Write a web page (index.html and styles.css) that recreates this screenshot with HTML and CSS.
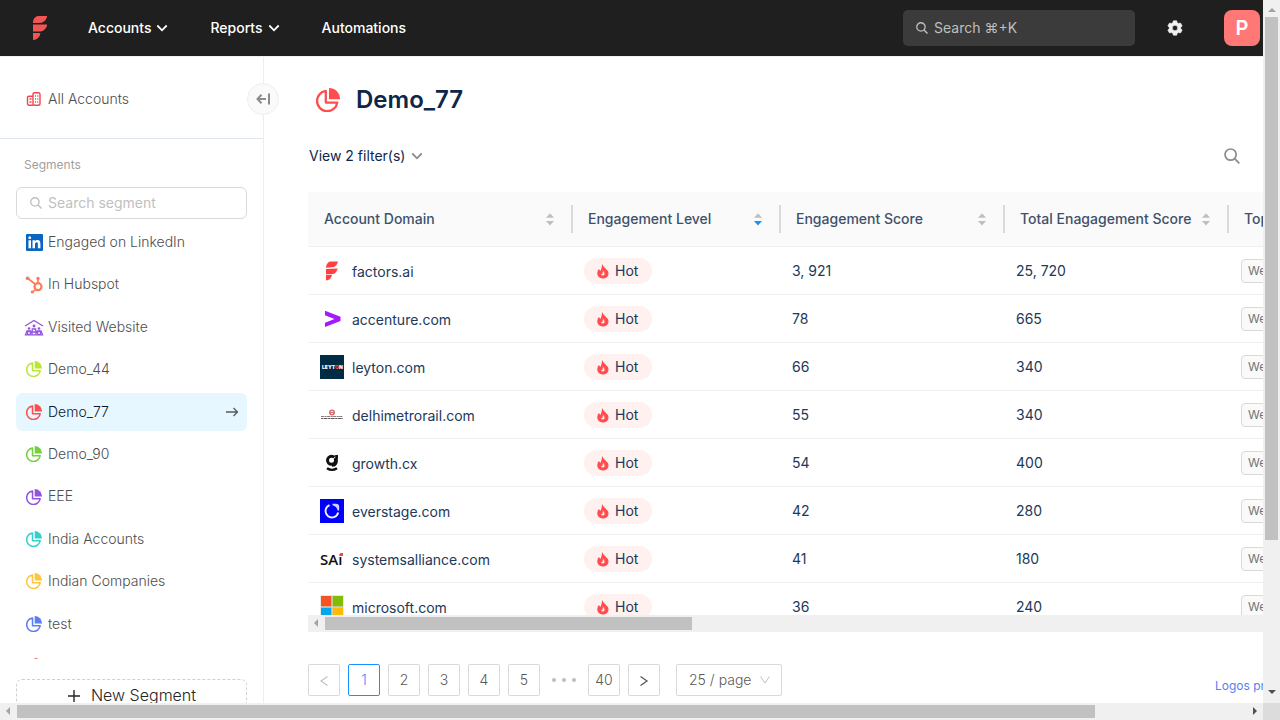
FILE: index.html
```html
<!DOCTYPE html>
<html lang="en">
<head>
<meta charset="utf-8">
<title>Demo_77</title>
<link rel="stylesheet" href="styles.css">
</head>
<body>
<svg class="defs" aria-hidden="true">
  <symbol id="pie" viewBox="0 0 24 24">
    <path d="M13 0A11 11 0 0 1 24 11.300H13Z" fill="currentColor"/>
    <path d="M9.800 2.900A10.200 10.200 0 1 0 21.300 14.600H9.800Z" fill="none" stroke="currentColor" stroke-width="2.300" stroke-linejoin="round"/>
  </symbol>
  <symbol id="search" viewBox="0 0 16 16">
    <circle cx="6.600" cy="6.600" r="5.600" fill="none" stroke="currentColor" stroke-width="1.700"/>
    <path d="M10.700 10.700 15.300 15.300" stroke="currentColor" stroke-width="1.900"/>
  </symbol>
  <symbol id="chevron" viewBox="0 0 12 12">
    <path d="M1.300 3.500 6 8.300 10.700 3.500" fill="none" stroke="currentColor" stroke-width="1.800"/>
  </symbol>
  <symbol id="factors" viewBox="0 0 14 24">
    <path d="M0 7V5.500Q1 0 6 0H14V1Q12 7 6 7ZM0 8.500H14V9.800Q12 15.600 6.500 15.600H0ZM0 17H7.500Q6.500 23.500 0 24Z" fill="currentColor"/>
  </symbol>
  <symbol id="flame" viewBox="0 0 12 15">
    <path d="M5.200 0C6 2.200 7.500 3.300 9 5 10.500 6.400 11.600 7.400 11.500 9.400 11.300 12.600 8.900 14.500 5.800 14.500 2.600 14.500.3 12.300.3 9.300.3 7.300 1 5.900 2 5L3.300 7C4.600 5.100 4.700 2.500 5.200 0Z" fill="currentColor"/>
    <path d="M6 6.500C6.300 7.800 7.600 8.400 7.600 9.700A1.700 1.700 0 0 1 4.200 9.900L5.600 9.400Z" fill="#fff1f0"/>
  </symbol>
  <symbol id="sort" viewBox="0 0 10 14">
    <path d="M1 5.800 5 1.300 9 5.800Z" fill="#bfbfbf"/>
    <path class="down" d="M1 9 5 13.500 9 9Z"/>
  </symbol>
</svg>

<div class="window">
  <div class="viewport">
    <header class="topbar">
      <a class="brand" href="#" aria-label="Home"><svg width="14" height="24"><use href="#factors"/></svg></a>
      <nav class="menu">
        <button type="button">Accounts <svg width="12" height="12"><use href="#chevron"/></svg></button>
        <button type="button">Reports <svg width="12" height="12"><use href="#chevron"/></svg></button>
        <a href="#">Automations</a>
      </nav>
      <button type="button" class="global-search"><svg width="12" height="12"><use href="#search"/></svg>Search ⌘+K</button>
      <button type="button" class="gear" aria-label="Settings">
        <svg width="16" height="16" viewBox="0 0 16 16"><path fill="currentColor" fill-rule="evenodd" stroke="currentColor" stroke-width=".6" stroke-linejoin="round" d="M6.300 .8H9.700L10.200 2.700 11.600 3.500 13.500 3 15.200 5.900 13.800 7.300V8.700L15.200 10.100 13.500 13 11.600 12.500 10.200 13.300 9.700 15.200H6.300L5.800 13.300 4.400 12.500 2.500 13 .8 10.100 2.200 8.700V7.300L.8 5.900 2.500 3 4.400 3.500 5.800 2.700ZM8 5.300A2.700 2.700 0 1 0 8 10.700 2.700 2.700 0 0 0 8 5.300Z"/></svg>
      </button>
      <button type="button" class="avatar">P</button>
    </header>

    <div class="body">
      <aside class="sidebar">
        <button type="button" class="collapse" aria-label="Collapse sidebar">
          <svg width="14" height="12" viewBox="0 0 14 12"><path d="M10 6H1.500M5.500 1.800 1.500 6 5.500 10.200M13 .5V11.500" fill="none" stroke="currentColor" stroke-width="2"/></svg>
        </button>
        <div class="all">
          <a href="#">
            <svg width="20" height="16" viewBox="0 0 20 16"><g fill="none" stroke="#f5434f" stroke-width="1.400"><path d="M9 5.200H5A1.500 1.500 0 0 0 3.500 6.700V12.800A1.500 1.500 0 0 0 5 14.300H9"/><rect x="9" y="1.700" width="7" height="12.600" rx="1.500"/></g><path d="M5.500 8H7.500M5.500 11H7.500M11 5H12M13.300 5H14.300M11 8H12M13.300 8H14.300M11 11H12M13.300 11H14.300" stroke="#f5434f" stroke-width="1.400"/></svg>
            All Accounts</a>
        </div>
        <h2>Segments</h2>
        <label class="segment-search"><svg width="12" height="12"><use href="#search"/></svg><input type="text" placeholder="Search segment" aria-label="Search segment"></label>
        <ul class="segments">
          <li><a href="#"><svg width="20" height="20" viewBox="0 0 20 20"><rect x="2" y="2" width="17" height="17" rx="1" fill="#0a66c2"/><path fill="#fff" d="M4.500 8.300H7V16.300H4.500ZM5.750 4.300A1.400 1.400 0 1 1 5.740 4.300ZM8.500 8.300H10.900V9.400C11.400 8.600 12.300 8.100 13.400 8.100 15.800 8.100 16.400 9.700 16.400 11.900V16.300H13.900V12.400C13.900 11.300 13.800 10.300 12.600 10.300 11.300 10.300 11 11.300 11 12.400V16.300H8.500Z"/></svg>Engaged on LinkedIn</a></li>
          <li><a href="#"><svg width="20" height="20" viewBox="0 0 20 20" class="c-hubspot"><g fill="none" stroke="currentColor"><circle cx="14" cy="11.700" r="3.500" stroke-width="2.200"/><path d="M14 7.500V4M11 9 4 3.500M11.500 14.500 8.500 17.300" stroke-width="1.700"/></g><g fill="currentColor"><circle cx="14" cy="3.500" r="1.700"/><circle cx="3.600" cy="3.300" r="1.900"/><circle cx="8.200" cy="17" r="1.500"/></g></svg>In Hubspot</a></li>
          <li><a href="#"><svg width="20" height="20" viewBox="0 0 20 20" class="c-purple"><g fill="none" stroke="currentColor" stroke-width="1.300"><path d="M1 9 10 3.500 19 9"/><circle cx="5" cy="11.500" r=".7"/><circle cx="10" cy="9" r=".8"/><circle cx="15" cy="11.500" r=".7"/><circle cx="5" cy="16" r="1.600"/><circle cx="15" cy="16" r="1.600"/><path d="M1.500 17.800 3 14H6.500L8 16.500 8.300 12H11.700L12 16.500 13.500 14H17L18.500 17.800ZM8 15H12"/></g></svg>Visited Website</a></li>
          <li><a href="#"><svg class="pie c-lime"><use href="#pie"/></svg>Demo_44</a></li>
          <li class="active"><a href="#" aria-current="page"><svg class="pie c-red"><use href="#pie"/></svg>Demo_77<svg class="go" width="14" height="10" viewBox="0 0 14 10"><path d="M1 5H12.500M8.500 1 12.500 5 8.500 9" fill="none" stroke="currentColor" stroke-width="1.300"/></svg></a></li>
          <li><a href="#"><svg class="pie c-green"><use href="#pie"/></svg>Demo_90</a></li>
          <li><a href="#"><svg class="pie c-purple"><use href="#pie"/></svg>EEE</a></li>
          <li><a href="#"><svg class="pie c-teal"><use href="#pie"/></svg>India Accounts</a></li>
          <li><a href="#"><svg class="pie c-gold"><use href="#pie"/></svg>Indian Companies</a></li>
          <li><a href="#"><svg class="pie c-blue"><use href="#pie"/></svg>test</a></li>
          <li><a href="#"><svg class="pie c-red"><use href="#pie"/></svg></a></li>
        </ul>
        <div class="sidebar-foot">
          <button type="button" class="new-segment"><svg width="14" height="14" viewBox="0 0 14 14"><path d="M7 1V13M1 7H13" stroke="currentColor" stroke-width="1.400"/></svg>New Segment</button>
        </div>
      </aside>

      <main class="main">
        <div class="title"><svg width="24" height="24" class="c-red"><use href="#pie"/></svg><h1>Demo_77</h1></div>
        <div class="tools">
          <button type="button" class="filters">View 2 filter(s) <svg width="12" height="12"><use href="#chevron"/></svg></button>
          <button type="button" class="find" aria-label="Search table"><svg width="16" height="16"><use href="#search"/></svg></button>
        </div>
        <div class="table-clip">
          <table>
            <colgroup><col class="w-domain"><col class="w-level"><col class="w-score"><col class="w-score"><col class="w-top"></colgroup>
            <thead>
              <tr>
                <th><div>Account Domain <svg class="sort"><use href="#sort"/></svg></div></th>
                <th><div>Engagement Level <svg class="sort sorted"><use href="#sort"/></svg></div></th>
                <th><div>Engagement Score <svg class="sort"><use href="#sort"/></svg></div></th>
                <th><div>Total Enagagement Score <svg class="sort"><use href="#sort"/></svg></div></th>
                <th><div>Top Engagements</div></th>
              </tr>
            </thead>
            <tbody>
              <tr>
                <td><div class="domain"><svg viewBox="0 0 24 24"><path d="M6 8.800V8Q7 2.500 11 2.500H18Q16.500 8.300 12 8.300ZM6 9.900 17.700 9.500Q16 15.200 12 15.200H6ZM6 16H12Q11 21 6 21.500Z" fill="#ff4040"/></svg>factors.ai</div></td>
                <td><span class="hot"><svg><use href="#flame"/></svg>Hot</span></td><td class="num">3, 921</td><td class="num">25, 720</td><td><span class="tag">Website Session</span></td>
              </tr>
              <tr>
                <td><div class="domain"><svg viewBox="0 0 24 24"><path d="M5 3.700 20.500 9.800V14L5 20V15.800L14.500 12 5 8.300Z" fill="#a31aff"/></svg>accenture.com</div></td>
                <td><span class="hot"><svg><use href="#flame"/></svg>Hot</span></td><td class="num">78</td><td class="num">665</td><td><span class="tag">Website Session</span></td>
              </tr>
              <tr>
                <td><div class="domain"><svg viewBox="0 0 24 24"><rect width="24" height="24" fill="#002b45"/><text x="2" y="14" class="leyton">LEYT<tspan fill="#e2543a">O</tspan>N</text></svg>leyton.com</div></td>
                <td><span class="hot"><svg><use href="#flame"/></svg>Hot</span></td><td class="num">66</td><td class="num">340</td><td><span class="tag">Website Session</span></td>
              </tr>
              <tr>
                <td><div class="domain"><svg viewBox="0 0 24 24"><circle cx="12" cy="9.500" r="2.200" fill="none" stroke="#d96b74" stroke-width="1.600"/><path d="M10 9.500H14" stroke="#d96b74"/><path d="M1 13.500H23" stroke="#8f7676" stroke-dasharray="3 .6 2 .5"/><path d="M1 15.500H23" stroke="#5a5a5a" stroke-dasharray="2 .5 4 .6"/></svg>delhimetrorail.com</div></td>
                <td><span class="hot"><svg><use href="#flame"/></svg>Hot</span></td><td class="num">55</td><td class="num">340</td><td><span class="tag">Website Session</span></td>
              </tr>
              <tr>
                <td><div class="domain"><svg viewBox="0 0 24 24"><g fill="none" stroke="#111"><circle cx="11.500" cy="9.300" r="4" stroke-width="3"/><path d="M7 17.200Q12 20.500 17 17.200" stroke-width="2.400"/><path d="M16.800 4V11Q16 14.800 12 14.800" stroke-width="2"/></g><path d="M11.500 9.500 17 4.200" stroke="#fff" stroke-width="1"/><path d="M14 4.500 17.900 3.800V8Z" fill="#111"/></svg>growth.cx</div></td>
                <td><span class="hot"><svg><use href="#flame"/></svg>Hot</span></td><td class="num">54</td><td class="num">400</td><td><span class="tag">Website Session</span></td>
              </tr>
              <tr>
                <td><div class="domain"><svg viewBox="0 0 24 24"><rect width="24" height="24" fill="#0000ff"/><path d="M9.500 6.200A6.400 6.400 0 1 0 18.200 13.500" fill="none" stroke="#f3f0ff" stroke-width="1.900"/><path d="M12.500 4.800H16Q19.200 4.800 19.200 8V11.500H17.600Q17 7.500 12.500 6.300Z" fill="#d5d2ff"/></svg>everstage.com</div></td>
                <td><span class="hot"><svg><use href="#flame"/></svg>Hot</span></td><td class="num">42</td><td class="num">280</td><td><span class="tag">Website Session</span></td>
              </tr>
              <tr>
                <td><div class="domain"><svg viewBox="0 0 24 24"><text x="0" y="18" class="sai">SAi</text><rect x="20" y="6" width="3" height="3" fill="#e0523c"/></svg>systemsalliance.com</div></td>
                <td><span class="hot"><svg><use href="#flame"/></svg>Hot</span></td><td class="num">41</td><td class="num">180</td><td><span class="tag">Website Session</span></td>
              </tr>
              <tr>
                <td><div class="domain"><svg viewBox="0 0 24 24"><path fill="#d8d3c8" d="M.5.5H23.500V23.500H.5Z"/><path fill="#f65325" d="M1 1H11.300V11.300H1Z"/><path fill="#81bc06" d="M12.700 1H23V11.300H12.700Z"/><path fill="#05a6f0" d="M1 12.700H11.300V23H1Z"/><path fill="#ffba08" d="M12.700 12.700H23V23H12.700Z"/></svg>microsoft.com</div></td>
                <td><span class="hot"><svg><use href="#flame"/></svg>Hot</span></td><td class="num">36</td><td class="num">240</td><td><span class="tag">Website Session</span></td>
              </tr>
            </tbody>
          </table>
        </div>
        <div class="bar bar-table" aria-hidden="true"><span class="arrow left"></span><span class="thumb"></span></div>
        <div class="foot">
          <nav class="pages" aria-label="Pages">
            <button type="button" class="prev" aria-label="Previous" disabled><svg width="10" height="12" viewBox="0 0 10 12"><path d="M8.500 2.500 2 7 8.500 11.500" fill="none" stroke="currentColor" stroke-width="1.100"/></svg></button>
            <button type="button" class="current">1</button>
            <button type="button">2</button>
            <button type="button">3</button>
            <button type="button">4</button>
            <button type="button">5</button>
            <span class="dots"><i></i><i></i><i></i></span>
            <button type="button">40</button>
            <button type="button" aria-label="Next"><svg width="10" height="12" viewBox="0 0 10 12"><path d="M1.500 2.500 8 7 1.500 11.500" fill="none" stroke="currentColor" stroke-width="1.300"/></svg></button>
            <span class="size"><select aria-label="Rows per page"><option>25 / page</option></select><svg width="12" height="12" viewBox="0 0 12 12"><path d="M1.500 2.500 6 9 10.500 2.500" fill="none" stroke="currentColor"/></svg></span>
          </nav>
          <a class="credit" href="#">Logos provided by Clearbit</a>
        </div>
      </main>
    </div>
  </div>
  <div class="bar bar-v" aria-hidden="true"><span class="arrow up"></span><span class="thumb"></span><span class="arrow down-arrow"></span></div>
  <div class="bar bar-h" aria-hidden="true"><span class="arrow left"></span><span class="thumb"></span><span class="arrow right"></span></div>
  <div class="corner"></div>
</div>
</body>
</html>
```
FILE: styles.css
```css
* { box-sizing: border-box; }
body { margin: 0; font: 14px/1.6 Inter, "Noto Sans", "DejaVu Sans", sans-serif; font-weight: 300; color: #0e2647; background: #fff; }
button, input, select { font: inherit; color: inherit; border: 0; background: none; padding: 0; margin: 0; }
a { color: inherit; text-decoration: none; }
svg { display: block; flex: none; }
h1, h2, ul { margin: 0; padding: 0; list-style: none; }
.defs { position: absolute; width: 0; height: 0; }

.window { display: grid; grid-template: minmax(0, 1fr) 17px / minmax(0, 1fr) 17px; height: 100vh; }
.viewport { display: flex; flex-direction: column; overflow: hidden; }

.topbar { display: flex; align-items: center; height: 56px; padding: 0 3px 0 33px; background: #1f1f1f; color: #fff; flex: none; font-weight: 500; }
.brand { color: #f05654; }
.menu { display: flex; gap: 42px; margin-left: 41px; }
.menu button { display: flex; align-items: center; gap: 5px; }
.global-search { display: flex; align-items: center; gap: 6px; width: 232px; height: 36px; margin-left: auto; padding: 0 13px; border-radius: 5px; background: #3b3b3b; color: #bfbfbf; font-weight: 400; }
.gear { margin: 0 41px 0 32px; color: #f0f0f0; }
.avatar { width: 36px; height: 36px; border-radius: 8px; background: #ff7875; font-size: 20px; font-weight: 600; line-height: 36px; }

.body { display: flex; flex: 1; min-height: 0; border-top: 1px solid #f0f0f0; }
.sidebar { position: relative; display: flex; flex-direction: column; flex: 0 0 264px; border-right: 1px solid #eee; color: #4d4d4d; }
.collapse { position: absolute; top: 26px; right: -16px; display: flex; align-items: center; justify-content: center; width: 32px; height: 32px; border: 1px solid #eee; border-radius: 50%; background: #fafafa; color: #8c8c8c; }
.all { height: 82px; padding: 31px 24px 0; border-bottom: 1px solid #dfe5ee; }
.all a { display: flex; align-items: center; gap: 4px; }
.sidebar h2 { padding: 16px 24px 12px; font-size: 12px; line-height: 20px; font-weight: 400; color: #a0a0a0; }
.segment-search { display: flex; align-items: center; gap: 6px; height: 32px; margin: 0 16px; padding: 0 13px; border: 1px solid #d9d9d9; border-radius: 6px; color: #bfbfbf; }
.segment-search input { width: 100%; outline: 0; font-weight: 400; }
.segment-search input::placeholder { color: #bfbfbf; opacity: 1; }
.segments { flex: 1; min-height: 0; overflow: hidden; padding: 4px 16px 0; display: flex; flex-direction: column; gap: 4px; }
.segments a { display: flex; align-items: center; gap: 4px; padding: 8px; border-radius: 6px; }
.segments li:last-child a { height: 38px; }
.active a { background: #e6f7ff; color: #0e1726; }
.pie { width: 16px; height: 16px; margin: 0 2px; }
.go { margin-left: auto; color: #595959; }
.sidebar-foot { height: 44px; padding: 20px 16px 0; overflow: hidden; flex: none; }
.new-segment { display: flex; align-items: center; justify-content: center; gap: 10px; width: 100%; height: 33px; border: 1px dashed #d0d0d0; border-radius: 6px; font-size: 16px; color: #262626; }

.c-red { color: #ff4d4f; }
.c-lime { color: #bae637; }
.c-green { color: #73d13d; }
.c-purple { color: #9254de; }
.c-teal { color: #36cfc9; }
.c-gold { color: #ffc53d; }
.c-blue { color: #597ef7; }
.c-hubspot { color: #ff7a59; }

.main { flex: 1; min-width: 0; padding: 24px 0 0 44px; overflow: hidden; }
.title { display: flex; align-items: center; gap: 16px; height: 38px; padding-left: 8px; }
.title h1 { font-size: 24px; line-height: 38px; font-weight: 600; }
.tools { display: flex; align-items: center; justify-content: space-between; height: 32px; margin: 21px 23px 20px 1px; }
.filters { display: flex; align-items: center; gap: 6px; font-weight: 400; }
.filters svg, .find { color: #8c8c8c; }

.table-clip { height: 423px; overflow: hidden; }
table { table-layout: fixed; width: 1160px; border-collapse: separate; border-spacing: 0; }
.w-domain { width: 264px; }
.w-level { width: 208px; }
.w-score { width: 224px; }
.w-top { width: 240px; }
thead tr { background: #fafafa; }
th { height: 55px; padding: 0; border-bottom: 1px solid #f0f0f0; color: #3e516c; font-weight: 500; text-align: left; white-space: nowrap; }
th div { display: flex; align-items: center; justify-content: space-between; height: 28px; margin-right: -1px; padding: 0 16px; border-right: 2px solid #d9d9d9; }
.sort { width: 10px; height: 14px; fill: #bfbfbf; }
.sorted { fill: #1890ff; }
td { height: 48px; padding: 0 12px; border-bottom: 1px solid #f0f0f0; font-weight: 400; color: #22385a; white-space: nowrap; }
.num { padding-top: 2px; }
.domain { display: flex; gap: 8px; padding-top: 2px; line-height: 26px; }
.domain svg { width: 24px; height: 24px; }
.leyton { font: 900 5px Inter, sans-serif; fill: #fff; }
.sai { font: 600 15px "Open Sans", sans-serif; fill: #111; }
.hot { display: inline-flex; align-items: center; gap: 6px; height: 26px; padding: 1px 14px 0 13px; border-radius: 13px; background: #fff1f0; vertical-align: middle; }
.hot svg { width: 12px; height: 15px; color: #ff4d4f; }
.tag { display: inline-block; height: 24px; padding: 0 6px; margin-left: 1px; border: 1px solid #d9d9d9; border-radius: 4px; background: #fafafa; font-size: 12px; line-height: 22px; color: #737373; vertical-align: middle; }

.foot { display: flex; justify-content: space-between; padding-top: 32px; }
.pages { display: flex; gap: 8px; color: #595959; }
.pages button { display: flex; align-items: center; justify-content: center; width: 32px; height: 32px; border: 1px solid #d9d9d9; border-radius: 2px; }
.pages .prev { color: #bfbfbf; }
.pages .current { border-color: #1890ff; color: #597ef7; }
.dots { display: flex; align-items: center; justify-content: center; gap: 6px; width: 32px; }
.dots i { width: 4px; height: 4px; border-radius: 50%; background: #bfbfbf; flex: none; }
.size { display: flex; align-items: center; justify-content: space-between; width: 106px; height: 32px; margin-left: 8px; padding: 0 10px 0 12px; border: 1px solid #d9d9d9; border-radius: 2px; color: #bfbfbf; }
.size select { appearance: none; color: #595959; }
.credit { width: 48px; padding-top: 12px; font-size: 12px; line-height: 20px; font-weight: 400; color: #597ef7; white-space: nowrap; }

.bar { display: flex; align-items: center; background: #f0f0f0; }
.bar-v { flex-direction: column; }
.thumb { background: #c1c1c1; }
.bar-v .thumb { width: 13px; flex: 0 0 523px; }
.bar-h .thumb { height: 13px; flex: 0 0 1078px; }
.bar-table { height: 17px; }
.bar-table .thumb { height: 13px; width: 367px; }
.arrow { position: relative; flex: none; width: 17px; height: 17px; color: #a3a3a3; }
.arrow::after { content: ""; display: block; width: 0; height: 0; margin: 4px 5px; border: 4px solid transparent; }
.left::after { border-right-color: currentColor; margin-left: 2px; }
.right::after { border-left-color: currentColor; margin-left: 7px; }
.up::after { border-bottom-color: currentColor; }
.down-arrow::after { border-top-color: currentColor; }
.down-arrow, .right { color: #505050; }
.bar-v .down-arrow { margin-top: auto; }
.bar-h .right { margin-left: auto; }
.corner { background: #dcdcdc; }
```
